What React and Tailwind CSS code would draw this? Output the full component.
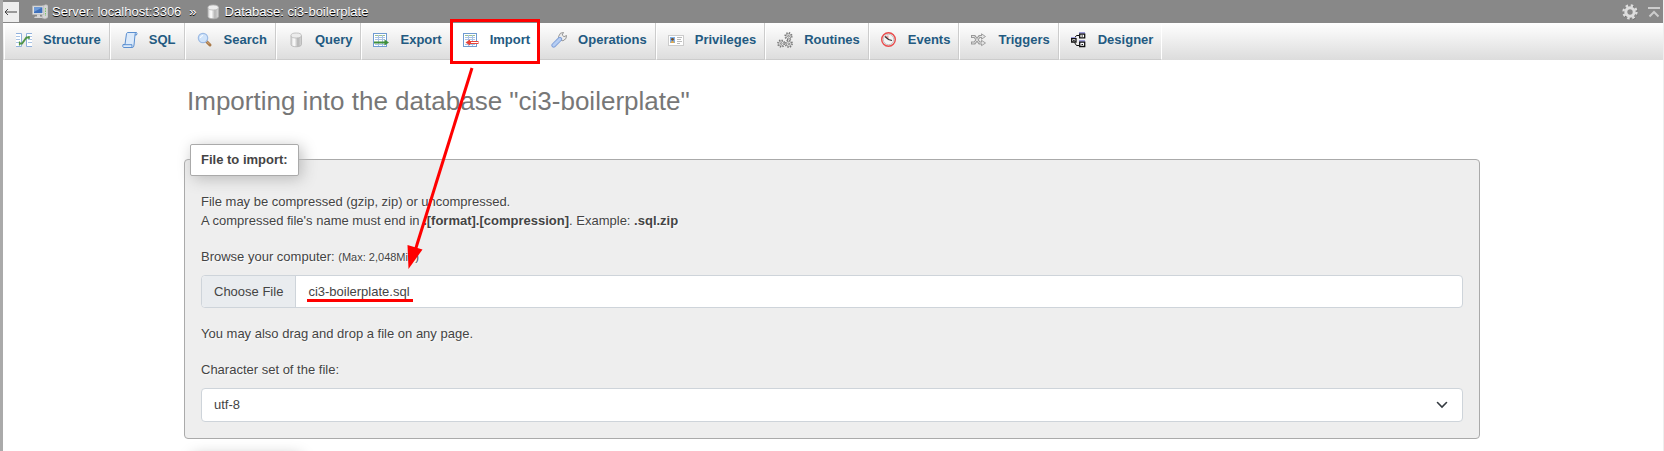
import React, { useRef, useState } from "react";

const TableIcon = ({ children }) => (
  <svg viewBox="0 0 16 16" className="size-4" aria-hidden="true">
    <rect x="0.5" y="1.5" width="13" height="13" fill="#fff" stroke="#6f9bd1" />
    <path d="M2 3.5h10" stroke="#9cc08c" />
    <path d="M2 5.5h10M2 7.5h10M2 12.5h10M5.5 3v11M9.5 3v11" stroke="#a9c3e4" />
    {children}
  </svg>
);

const Cylinder = () => (
  <svg viewBox="0 0 16 16" className="size-4" aria-hidden="true">
    <defs>
      <linearGradient id="cyl">
        <stop offset="0" stopColor="#d2d2d2" />
        <stop offset="0.3" stopColor="#fff" />
        <stop offset="0.65" stopColor="#b4b4b4" />
        <stop offset="1" stopColor="#d8d8d8" />
      </linearGradient>
    </defs>
    <path d="M3 3.5v9c0 3 10.500 3 10.500 0v-9" fill="url(#cyl)" stroke="#b0b0b0" strokeWidth="0.8" />
    <ellipse cx="8.200" cy="3.500" rx="5.200" ry="2.500" fill="#ececec" stroke="#b8b8b8" strokeWidth="0.8" />
  </svg>
);

const gear = (x, y) => (
  <g key={x + "-" + y} transform={`translate(${x} ${y})`}>
    <circle r="3.300" fill="none" stroke="#777" strokeWidth="1.600" strokeDasharray="1.300 1.290" />
    <circle r="2.500" fill="#f4f4f4" stroke="#777" strokeWidth="0.7" />
    <circle r="0.900" fill="#fff" stroke="#555" strokeWidth="0.7" />
  </g>
);

const icons = {
  Structure: (
    <svg viewBox="0 0 16 16" className="size-4" aria-hidden="true">
      <path d="M0 1.500h5.500v13H0M16 1.500h-5.500v13H16" fill="#fff" stroke="#8fb0dc" />
      <path d="M0 4.500h4M0 7.500h4M0 10.500h4M12 4.500h4M12 7.500h4M12 10.500h4" stroke="#a9c3e4" />
      <path d="M4 11.500h2l4.500-6h3" fill="none" stroke="#4f9446" strokeWidth="1.800" />
      <path d="M3.500 9.500v4M13 4v3" stroke="#4f9446" strokeWidth="1.200" />
    </svg>
  ),
  SQL: (
    <svg viewBox="0 0 16 16" className="size-4" aria-hidden="true">
      <path d="M4.500 1.500Q5 .5 6 .5H14.500Q15.500 1 14.500 3H13L12 13Q12 15.500 10 15.500H1.500Q.2 14.500 1 12.500H3z" fill="#dceafa" stroke="#5b8fd0" />
      <path d="M1.500 12.700h8.500q-.5 2 .3 2.600M13 3q0-1.800 1-2.200" fill="none" stroke="#5b8fd0" />
    </svg>
  ),
  Search: (
    <svg viewBox="0 0 16 16" className="size-4" aria-hidden="true">
      <path d="M9.500 9.500l3.500 3.500" stroke="#a87848" strokeWidth="3" strokeLinecap="round" />
      <path d="M9.500 9.200l3 3" stroke="#d9ad7c" strokeWidth="1" />
      <circle cx="6" cy="6" r="4.700" fill="#cfe3fa" stroke="#9dbbe4" strokeWidth="1.200" />
      <path d="M3.500 6Q3.500 3.700 6 3.500" fill="none" stroke="#fff" />
    </svg>
  ),
  Query: <Cylinder />,
  Export: (
    <TableIcon>
      <path d="M1 10.500h11" stroke="#3f8f3a" strokeWidth="2" />
      <path d="M11.500 7.500l4.500 3-4.500 3z" fill="#3f8f3a" />
    </TableIcon>
  ),
  Import: (
    <TableIcon>
      <path d="M6 10.500h9.500" stroke="#e8453c" strokeWidth="3" />
      <path d="M7 7.500v6L2.500 10.500z" fill="#e8453c" />
      <path d="M8 10.500h7" stroke="#fff" strokeWidth="1" />
    </TableIcon>
  ),
  Operations: (
    <svg viewBox="0 0 16 16" className="size-4" aria-hidden="true">
      <path d="M8 8L7.500 4.500 9.500 1.200 12.500.5 11.200 3l1.800 1.700L15.500 3.500 15 6.500 12 8.800z" fill="#ececec" stroke="#8c8c8c" strokeWidth="0.9" strokeLinejoin="round" />
      <path d="M2.700 13.300L8.800 7.200" stroke="#7f9fd8" strokeWidth="4.600" strokeLinecap="round" />
      <path d="M2.700 13.300L8.800 7.200" stroke="#b5cdf3" strokeWidth="2.800" strokeLinecap="round" />
    </svg>
  ),
  Privileges: (
    <svg viewBox="0 0 16 16" className="size-4" aria-hidden="true">
      <rect x="0.5" y="3.500" width="15" height="10" fill="#fff" stroke="#ccc" />
      <rect x="2" y="5" width="5" height="6" fill="#7fb0e6" />
      <circle cx="4.500" cy="7.300" r="1.400" fill="#7a4b22" />
      <path d="M2.500 11q0-2 2-2t2 2z" fill="#e0a94f" />
      <path d="M9 5.500h5M9 7.500h4M9 9.500h5M9 11.500h3" stroke="#bbb" />
    </svg>
  ),
  Routines: (
    <svg viewBox="0 0 16 16" className="size-4" aria-hidden="true">
      {[gear(11.5, 4.2), gear(4.2, 11.5), gear(11.8, 11.8)]}
    </svg>
  ),
  Events: (
    <svg viewBox="0 0 16 16" className="size-4" aria-hidden="true">
      <circle cx="7.500" cy="7.500" r="6.800" fill="#e9e9e9" stroke="#ea4b4b" strokeWidth="1.400" />
      <circle cx="7.500" cy="7.500" r="5.200" fill="#f4f4f4" stroke="#aaa" strokeWidth="0.6" />
      <path d="M7.500 7.500V3.200L4 4.500z" fill="#f3a0a0" />
      <path d="M4 4.500l3.500 3L11 8.500" fill="none" stroke="#333" strokeWidth="1.300" />
    </svg>
  ),
  Triggers: (
    <svg viewBox="0 0 16 16" className="size-4" aria-hidden="true">
      <path d="M0 4.500h3.500l5 6.500h3M0 11h3.500l5-6.500h3" fill="none" stroke="#999" strokeWidth="2.800" />
      <path d="M10.500 1.800l4 2.700-4 2.700zM10.500 8.300l4 2.700-4 2.700z" fill="#e4e4e4" stroke="#999" strokeWidth="0.9" />
      <path d="M1 4.500h2.500l5 6.500h3M1 11h2.500l5-6.500h3" fill="none" stroke="#e4e4e4" />
    </svg>
  ),
  Designer: (
    <svg viewBox="0 0 16 16" className="size-4" aria-hidden="true">
      <path d="M3.500 6L5.500 3.500H8M3.500 10.500L5.500 13.500H8" fill="none" stroke="#111" />
      <path d="M0 5h5v2H0zM8 0h6v2H8zM8 8h6v2H8z" fill="#9c9cd8" />
      <path d="M.7 6.700h4.300v3.300H.7zM8.700 2.200h5v3.600h-5zM8.700 10.200h5v4.300h-5z" fill="#fff" stroke="#111" strokeWidth="1.300" />
      <path d="M2.200 8.500h1.500M10.500 4h1.500M10.500 12.500h1.500" stroke="#111" />
    </svg>
  ),
};

const tabs = Object.keys(icons);

function Tab({ name }) {
  const active = name === "Import";
  return (
    <li className={"group flex " + (active ? "relative bg-white" : "")}>
      <a
        href={"#" + name.toLowerCase()}
        className={
          "flex items-center gap-[11px] border-x border-b border-l-white border-r-[#ccc] pt-[1px] pr-2 pb-1 pl-[11px] font-bold text-[#235a81] group-last:border-r-white " +
          (active ? "border-b-white" : "border-b-[#ccc]")
        }
      >
        {icons[name]}
        {name}
      </a>
      {active && <span className="pointer-events-none absolute -inset-x-px -top-1 -bottom-1 border-3 border-[#f00]" />}
    </li>
  );
}

export default function App() {
  const picker = useRef(null);
  const [fileName, setFileName] = useState("ci3-boilerplate.sql");

  return (
    <div className="relative flex h-screen flex-col overflow-hidden border-r border-l-3 border-r-[#eee] border-l-[#aaa] bg-white font-['Liberation_Sans',Arial,sans-serif] text-[13px] leading-[19px] text-[#444]">
      <header className="flex h-[23px] shrink-0 items-center bg-[#888] pr-[3px] text-white">
        <button aria-label="Hide panel" className="flex h-5 w-4 items-center justify-center bg-[#eee] text-[#333]">
          <svg viewBox="0 0 14 10" className="h-[10px] w-[14px]" aria-hidden="true">
            <path d="M1 5h12M4 2L1 5l3 3" fill="none" stroke="#444" />
          </svg>
        </button>
        <nav aria-label="Breadcrumb" className="ml-[13px] flex items-center [text-shadow:0_1px_0_#000]">
          <svg viewBox="0 0 16 16" className="mr-1 size-4" aria-hidden="true">
            <path d="M10 2l4-1.500 2 1v12l-3 1.500-3-1z" fill="#d4d4d4" stroke="#aaa" strokeWidth="0.6" />
            <path d="M13.500 4v8" stroke="#7bc46b" strokeDasharray="1.500 1" />
            <rect x="0.700" y="2" width="11" height="8.500" fill="#e6e6e6" stroke="#bbb" strokeWidth="0.8" />
            <rect x="2" y="3.300" width="8.400" height="5.800" fill="#3e70bb" />
            <path d="M2 3.300h8.400L2 8z" fill="#6e9bd8" />
            <path d="M5 10.500v2H3l-1 1.500h8.500l-1-1.500H8v-2z" fill="#d4d4d4" />
          </svg>
          <a href="#server">Server: localhost:3306</a>
          <span className="mx-2">»</span>
          <span className="mr-1"><Cylinder /></span>
          <a href="#database">Database: ci3-boilerplate</a>
        </nav>
        <div className="ml-auto flex items-center gap-[10px]">
          <button aria-label="Page settings">
            <svg viewBox="0 0 16 16" className="block size-4" aria-hidden="true">
              <circle cx="8.500" cy="8.500" r="6.500" fill="none" stroke="#666" strokeWidth="2.400" strokeDasharray="2.550 2.550" />
              <circle cx="8" cy="8" r="6.500" fill="none" stroke="#ddd" strokeWidth="2.400" strokeDasharray="2.550 2.550" />
              <circle cx="8" cy="8" r="4.200" fill="none" stroke="#ddd" strokeWidth="3" />
            </svg>
          </button>
          <button aria-label="Scroll to top">
            <svg viewBox="0 0 12 12" className="block size-3" aria-hidden="true">
              <path d="M0 2h12M1.500 10.500L6 6l4.500 4.500" fill="none" stroke="#ccc" strokeWidth="2" />
            </svg>
          </button>
        </div>
      </header>

      <nav aria-label="Database" className="shrink-0 bg-linear-to-b from-white to-[#dcdcdc]">
        <ul className="flex h-[37px] pl-[1px]">
          {tabs.map((name) => <Tab key={name} name={name} />)}
        </ul>
      </nav>

      <main className="pr-[2px]">
        <div className="mx-auto max-w-[1320px] px-3">
          <h1 className="mt-6 ml-[3px] text-[26px] leading-[34px] text-[#777]">Importing into the database "ci3-boilerplate"</h1>

          <section className="mt-[41px] rounded border border-[#aaa] bg-[#eee] px-4 pb-4 [text-shadow:1px_1px_2px_#fff]">
            <h2 className="-mt-4 -ml-[11px] w-fit rounded-xs border border-[#aaa] bg-white px-[10px] py-[6px] leading-[18px] font-bold shadow-[3px_3px_15px_#bbb]">
              File to import:
            </h2>
            <p className="mt-4">File may be compressed (gzip, zip) or uncompressed.</p>
            <p>A compressed file's name must end in <b>.[format].[compression]</b>. Example: <b>.sql.zip</b></p>
            <label htmlFor="file-name" className="mt-[17px] mb-2 block">
              Browse your computer: <small className="text-[11px]">(Max: 2,048MiB)</small>
            </label>
            <div className="relative flex h-[33px] rounded border border-[#ced4da] bg-white [text-shadow:none]">
              <button onClick={() => picker.current.click()} className="rounded-l border-r border-[#ced4da] bg-[#e9ecef] px-3">
                Choose File
              </button>
              <input id="file-name" readOnly value={fileName} className="min-w-0 flex-1 px-3 outline-none" />
              <input ref={picker} type="file" aria-label="File" className="hidden" onChange={(e) => setFileName(e.target.files[0].name)} />
              <span className="pointer-events-none absolute bottom-[5px] left-[105px] h-[3px] w-[106px] bg-[#f00]" />
            </div>
            <p className="mt-4">You may also drag and drop a file on any page.</p>
            <label htmlFor="charset" className="mt-[17px] mb-[9px] block">Character set of the file:</label>
            <div className="grid items-center">
              <select id="charset" className="col-start-1 row-start-1 h-[34px] appearance-none rounded border border-[#ced4da] bg-white px-3 pb-[2px]">
                <option>utf-8</option>
              </select>
              <svg viewBox="0 0 12 8" className="pointer-events-none col-start-1 row-start-1 mr-[15px] h-2 w-3 justify-self-end" aria-hidden="true">
                <path d="M1.500 1.500l4.500 4.500 4.500-4.500" fill="none" stroke="#343a40" strokeWidth="1.600" strokeLinecap="round" />
              </svg>
            </div>
          </section>
          <div className="mt-[14px] ml-[6px] h-8 w-[108px] bg-white shadow-[3px_3px_15px_#bbb]" />
        </div>
      </main>

      <svg viewBox="0 0 80 210" className="pointer-events-none absolute top-16 left-[397px] h-[210px] w-20" aria-hidden="true">
        <path d="M72 4L15 187" stroke="#f00" strokeWidth="3" />
        <path d="M8.500 205L7.500 181l15 4.500z" fill="#f00" />
      </svg>
    </div>
  );
}
